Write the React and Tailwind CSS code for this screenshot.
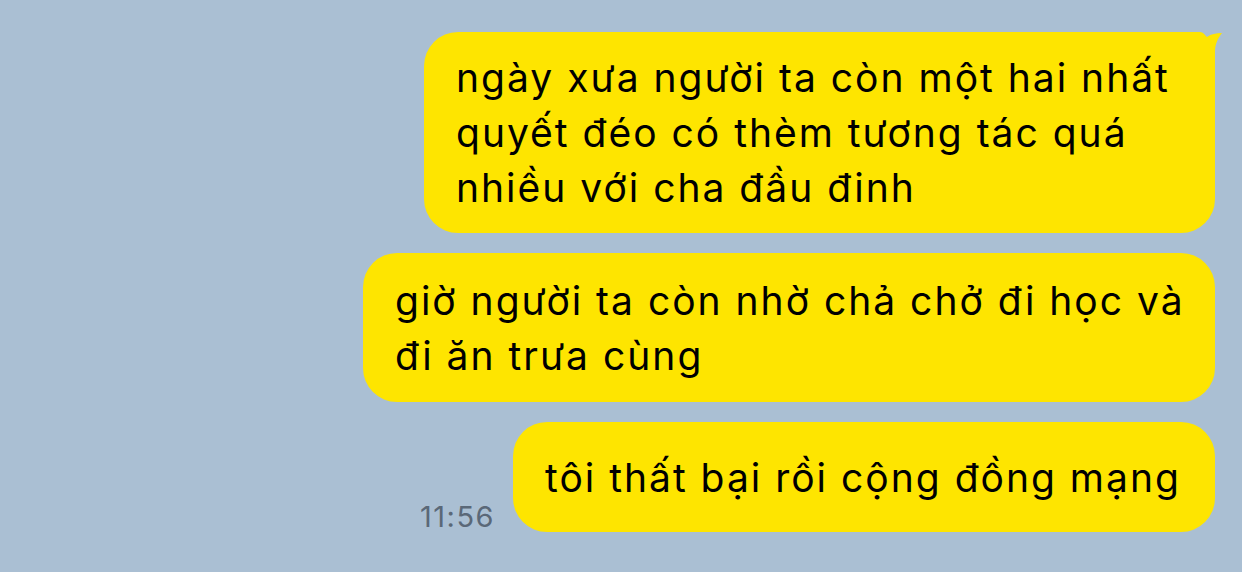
export default function App() {
  return (
    <div className="w-[1242px] h-[572px] overflow-hidden bg-[#aabfd3] font-['Inter','Noto_Sans',sans-serif]">
      <div className="flex flex-col items-end gap-5 pt-8 pr-[27px]">
        {/* first message, tail sits behind the bubble */}
        <div className="relative">
          <svg
            className="absolute -top-[2px] -right-[10px]"
            width="45"
            height="40"
            viewBox="0 0 45 40"
          >
            <path
              d="M0 2 L20 2 C23 2 25 5 27 7 C31 4 36 3 42 3 C38 8 35 14 35 22 L35 40 L0 40 Z"
              fill="#fee500"
            />
          </svg>
          <div className="relative w-[791px] rounded-[34px] bg-[#fee500] pl-8 py-[18px] text-[39px] tracking-[2px] leading-[55px] text-black whitespace-nowrap">
            <div>ngày xưa người ta còn một hai nhất</div>
            <div>quyết đéo có thèm tương tác quá</div>
            <div>nhiều với cha đầu đinh</div>
          </div>
        </div>

        <div className="w-[852px] rounded-[34px] bg-[#fee500] pl-8 pt-[20px] pb-[19px] text-[39px] tracking-[2px] leading-[55px] text-black whitespace-nowrap">
          <div>giờ người ta còn nhờ chả chở đi học và</div>
          <div>đi ăn trưa cùng</div>
        </div>

        <div className="flex items-end gap-[18px]">
          <span className="mb-[1px] text-[29px] leading-none tracking-[1.5px] text-[#5a6878]">11:56</span>
          <div className="w-[702px] rounded-[34px] bg-[#fee500] pl-8 pt-[28px] pb-[27px] text-[39px] tracking-[2px] leading-[55px] text-black whitespace-nowrap">
            tôi thất bại rồi cộng đồng mạng
          </div>
        </div>
      </div>
    </div>
  );
}
